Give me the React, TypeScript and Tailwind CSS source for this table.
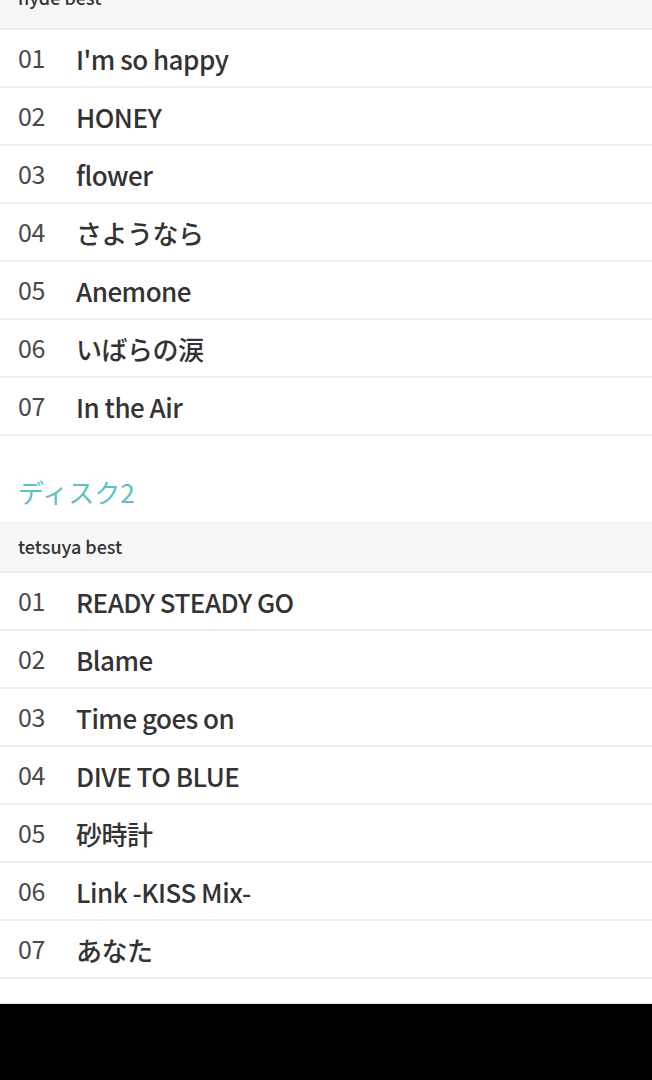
import React from 'react';

const discs = [
  {
    heading: null,
    label: 'hyde best',
    tracks: ["I'm so happy", 'HONEY', 'flower', 'さようなら', 'Anemone', 'いばらの涙', 'In the Air'],
  },
  {
    heading: 'ディスク2',
    label: 'tetsuya best',
    tracks: ['READY STEADY GO', 'Blame', 'Time goes on', 'DIVE TO BLUE', '砂時計', 'Link -KISS Mix-', 'あなた'],
  },
];

const font = "font-['Noto_Sans_CJK_JP','Noto_Sans',sans-serif]";

export default function App() {
  return (
    <div className={`w-[652px] h-[1080px] overflow-hidden bg-black ${font}`}>
      <div className="bg-white -mt-[22px]">
        {discs.map((disc, d) => (
          <section key={disc.label}>
            {disc.heading && (
              <div className="h-[85px] flex items-end pl-[18px] pb-[12px]">
                <h2 className="text-[26px] leading-[34px] text-[#5ec2c4] font-normal">{disc.heading}</h2>
              </div>
            )}
            <div className="h-[52px] box-border bg-[#f7f7f7] border-b-2 border-[#ececec] flex items-center pl-[18px]">
              <span className={`text-[18px] font-medium text-[#333] ${d === 0 ? '-translate-y-[6px]' : ''}`}>
                {disc.label}
              </span>
            </div>
            <ul>
              {disc.tracks.map((t, i) => (
                <li
                  key={t}
                  className="h-[58px] box-border border-b-2 border-[#ededed] flex items-center pl-[18px]"
                >
                  <span className="w-[58px] text-[25px] font-normal text-[#4a4a4a] tracking-[-0.5px]">
                    {String(i + 1).padStart(2, '0')}
                  </span>
                  <span className="text-[26px] font-medium text-[#333] tracking-[-0.5px]">{t}</span>
                </li>
              ))}
            </ul>
          </section>
        ))}
        <div className="h-[25px] border-b border-[#e4e4e4]" />
      </div>
    </div>
  );
}
